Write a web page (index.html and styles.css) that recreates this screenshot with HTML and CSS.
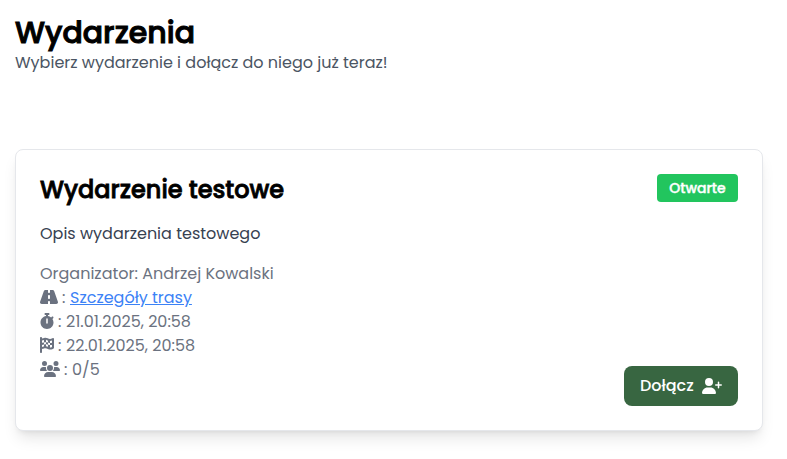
FILE: index.html
```html
<!DOCTYPE html>
<html lang="pl">
<head>
<meta charset="utf-8">
<title>Wydarzenia</title>
<link rel="stylesheet" href="styles.css">
</head>
<body>
<main class="page">
  <header class="page-header">
    <h1 class="heading">Wydarzenia</h1>
    <p class="subtitle">Wybierz wydarzenie i dołącz do niego już teraz!</p>
  </header>
  <article class="card">
    <div class="card-top">
      <h2 class="title">Wydarzenie testowe</h2>
      <span class="badge">Otwarte</span>
    </div>
    <p class="description">Opis wydarzenia testowego</p>
    <div class="card-bottom">
      <div class="details">
        <p>Organizator: Andrzej Kowalski</p>
        <p class="detail"><svg class="icon road" viewBox="0 0 576 512"><path d="M256 32H181.2c-27.1 0-51.3 17.1-60.3 42.6L3.1 407.2C1.1 413 0 419.2 0 425.4C0 455.5 24.5 480 54.6 480H256V416c0-17.7 14.3-32 32-32s32 14.3 32 32v64H521.4c30.2 0 54.6-24.5 54.6-54.6c0-6.2-1.1-12.4-3.1-18.2L455.1 74.6C446 49.1 421.9 32 394.8 32H320V96c0 17.7-14.3 32-32 32s-32-14.3-32-32V32zm64 192v64c0 17.7-14.3 32-32 32s-32-14.3-32-32V224c0-17.7 14.3-32 32-32s32 14.3 32 32z"/></svg><span class="colon">:</span><a class="link" href="#">Szczegóły trasy</a></p>
        <p class="detail"><svg class="icon" viewBox="0 0 448 512"><path d="M176 0c-17.7 0-32 14.3-32 32s14.3 32 32 32h16V98.4C92.3 113.8 16 200 16 304c0 114.9 93.1 208 208 208s208-93.1 208-208c0-41.8-12.3-80.7-33.5-113.2l24.1-24.1c12.5-12.5 12.5-32.8 0-45.3s-32.8-12.5-45.3 0L355.7 143c-28.1-23-62.2-38.8-99.7-44.6V64h16c17.7 0 32-14.3 32-32s-14.3-32-32-32H176zm72 192V320c0 13.3-10.7 24-24 24s-24-10.7-24-24V192c0-13.3 10.7-24 24-24s24 10.7 24 24z"/></svg><span class="colon">:</span><span>21.01.2025, 20:58</span></p>
        <p class="detail"><svg class="icon" viewBox="0 0 448 512"><path d="M32 0C49.7 0 64 14.3 64 32V48l69-17.2c38.1-9.5 78.3-5.1 113.5 12.5c46.3 23.2 100.8 23.2 147.1 0l9.6-4.8C423.8 28.1 448 43.1 448 66.1V345.8c0 13.3-8.3 25.3-20.8 30l-34.7 13c-46.2 17.3-97.6 14.6-141.7-7.4c-37.9-19-81.3-23.7-122.5-13.4L64 384v96c0 17.7-14.3 32-32 32s-32-14.3-32-32V32C0 14.3 14.3 0 32 0zM64 187.1l64-13.9v65.5L64 252.6V318l48.8-12.2c5.1-1.3 10.1-2.4 15.2-3.3V238.7l38.9-8.4c8.3-1.8 16.7-2.5 25.1-2.1l0-64c13.6 .4 27.2 2.6 40.4 6.4l23.6 6.9v66.7l-41.7-12.3c-7.3-2.1-14.8-3.4-22.3-3.8v71.4c21.8 1.9 43.3 6.7 64 14.4V244.2l22.7 6.7c13.5 4 27.3 6.4 41.3 7.4V194c-7.8-.8-15.6-2.3-23.2-4.5l-40.8-12v-62c-13-3.8-25.8-8.8-38.2-15c-8.2-4.1-16.9-7-25.8-8.8v72.4c-13-.4-26 .8-38.7 3.6L128 173.2V98L64 114v73.1zM320 335.7c16.8 1.5 33.9-.7 50-6.8l14-5.2V251.9l-7.9 1.8c-18.4 4.3-37.3 5.7-56.1 4.5v77.4zm64-149.4V115.4c-20.9 6.1-42.4 9.1-64 9.1V194c13.9 1.4 28 .5 41.7-2.6l22.3-5.2z"/></svg><span class="colon">:</span><span>22.01.2025, 20:58</span></p>
        <p class="detail"><svg class="icon users" viewBox="0 0 640 512"><path d="M144 0a80 80 0 1 1 0 160A80 80 0 1 1 144 0zM512 0a80 80 0 1 1 0 160A80 80 0 1 1 512 0zM0 298.7C0 239.8 47.8 192 106.7 192h42.7c15.9 0 31 3.5 44.6 9.7c-1.3 7.2-1.9 14.7-1.9 22.3c0 38.2 16.8 72.5 43.3 96H21.3C9.6 320 0 310.4 0 298.7zM405.3 320h-.7c26.6-23.5 43.3-57.8 43.3-96c0-7.6-.7-15-1.9-22.3c13.6-6.3 28.7-9.7 44.6-9.7h42.7C592.2 192 640 239.8 640 298.7c0 11.8-9.6 21.3-21.3 21.3H405.3zM224 224a96 96 0 1 1 192 0 96 96 0 1 1-192 0zM128 485.3C128 411.7 187.7 352 261.3 352H378.7C452.3 352 512 411.7 512 485.3c0 14.7-11.9 26.7-26.7 26.7H154.7c-14.7 0-26.7-11.9-26.7-26.7z"/></svg><span class="colon">:</span><span>0/5</span></p>
      </div>
      <button class="join" type="button"><span>Dołącz</span><svg class="icon users" viewBox="0 0 640 512"><path d="M96 128a128 128 0 1 1 256 0A128 128 0 1 1 96 128zM0 482.3C0 383.8 79.8 304 178.3 304h91.4C368.2 304 448 383.8 448 482.3c0 16.4-13.3 29.7-29.7 29.7H29.7C13.3 512 0 498.7 0 482.3zM504 312V248H440c-13.3 0-24-10.7-24-24s10.7-24 24-24h64V136c0-13.3 10.7-24 24-24s24 10.7 24 24v64h64c13.3 0 24 10.7 24 24s-10.7 24-24 24H552v64c0 13.3-10.7 24-24 24s-24-10.7-24-24z"/></svg></button>
    </div>
  </article>
</main>
</body>
</html>
```
FILE: styles.css
```css
* { box-sizing: border-box; }
body {
  margin: 0;
  background: #fff;
  color: #000;
  font: 16px/24px Poppins, Inter, "Liberation Sans", sans-serif;
  white-space: nowrap;
}
h1, h2, p { margin: 0; }
.page { padding: 15px 24px 28px 15px; }
.heading {
  font-size: 30px;
  line-height: 36px;
  font-weight: 500;
  -webkit-text-stroke: 1px currentColor;
}
.subtitle { color: #4b5563; }
.card {
  margin-top: 74px;
  height: 282px;
  padding: 24px;
  display: flex;
  flex-direction: column;
  background: #fff;
  border: 1px solid #e5e7eb;
  border-radius: 8px;
  box-shadow: 0 10px 15px -3px rgba(0, 0, 0, .1), 0 4px 6px -4px rgba(0, 0, 0, .1);
}
.card-top { display: flex; justify-content: space-between; align-items: flex-start; }
.title {
  font-size: 24px;
  line-height: 32px;
  font-weight: 500;
  -webkit-text-stroke: .8px currentColor;
}
.badge {
  width: 81px;
  height: 28px;
  border-radius: 4px;
  background: #22c55e;
  color: #fff;
  font-size: 14px;
  line-height: 28px;
  font-weight: 500;
  -webkit-text-stroke: .4px currentColor;
  text-align: center;
}
.description { margin-top: 16px; color: #374151; }
.card-bottom {
  flex: 1;
  display: flex;
  justify-content: space-between;
  align-items: flex-end;
  margin-top: 16px;
}
.details { align-self: flex-start; color: #6b7280; }
.detail { display: flex; align-items: center; }
.icon { width: 14px; height: 16px; flex: none; fill: currentColor; }
.detail .icon { margin-bottom: 2px; }
.detail .road { width: 18px; }
.icon.users { width: 20px; }
.colon { width: 12px; padding-left: 4px; }
.link { color: #3b82f6; text-decoration: underline; }
.join {
  display: flex;
  align-items: center;
  justify-content: space-between;
  width: 114px;
  height: 40px;
  padding: 0 16px;
  border: 0;
  border-radius: 8px;
  background: #386641;
  color: #fff;
  font: inherit;
  font-weight: 500;
}
```
